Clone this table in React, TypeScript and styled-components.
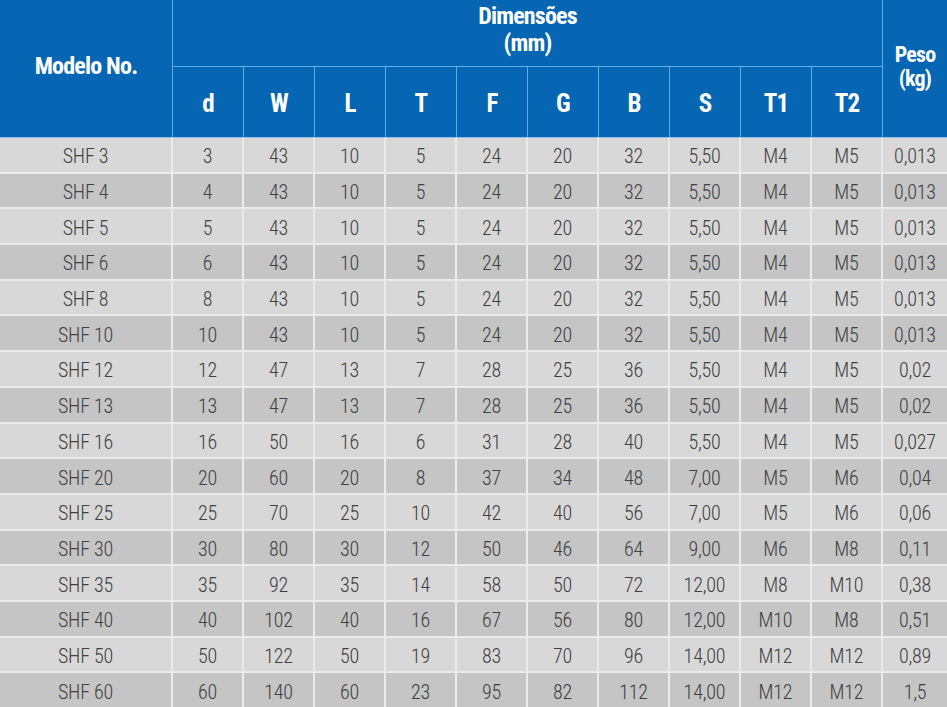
import React from "react";
import styled, { createGlobalStyle } from "styled-components";

const GlobalStyle = createGlobalStyle`
  html, body { margin: 0; padding: 0; background: #ffffff; }
  body { font-family: "Roboto Condensed", "DejaVu Sans Condensed", "Liberation Sans Narrow", Roboto, sans-serif; }
`;

const COLS = "172px repeat(10, 70px) 1fr";

const Page = styled.div`
  width: 947px;
  height: 707px;
  overflow: hidden;
  background: #ebebeb;
`;

const Header = styled.div`
  display: grid;
  grid-template-columns: ${COLS};
  grid-template-rows: 66px 70px;
  gap: 1px;
  background: #62ade6;
  border-bottom: 1px solid #8fc3ea;
  height: 138px;
  box-sizing: border-box;
`;

const HeadCell = styled.div<{ $col?: string; $row?: string; $size?: number; $gap?: number; $pad?: string }>`
  background: #0666b4;
  color: #ffffff;
  font-weight: 700;
  font-size: ${(p) => p.$size ?? 25}px;
  letter-spacing: -0.8px;
  display: flex;
  flex-direction: column;
  align-items: center;
  justify-content: center;
  gap: ${(p) => p.$gap ?? 0}px;
  text-align: center;
  grid-column: ${(p) => p.$col ?? "auto"};
  grid-row: ${(p) => p.$row ?? "auto"};
  padding: ${(p) => p.$pad ?? "0"};
`;

const HeadLine = styled.span`
  display: block;
  line-height: 1;
  white-space: nowrap;
`;

const Body = styled.div`
  display: flex;
  flex-direction: column;
  gap: 2px;
`;

const Row = styled.div`
  display: grid;
  grid-template-columns: 171px repeat(10, 69px) 1fr;
  column-gap: 2px;
  height: 33.7px;
`;

const Cell = styled.div<{ $dark: boolean }>`
  background: ${(p) => (p.$dark ? "#c5c5c5" : "#d8d8d8")};
  color: #404040;
  font-size: 20px;
  font-weight: 300;
  letter-spacing: -0.2px;
  display: flex;
  align-items: center;
  justify-content: center;
  padding-top: 3px;
  box-sizing: border-box;
`;

const rows: string[][] = [
  ["SHF 3", "3", "43", "10", "5", "24", "20", "32", "5,50", "M4", "M5", "0,013"],
  ["SHF 4", "4", "43", "10", "5", "24", "20", "32", "5,50", "M4", "M5", "0,013"],
  ["SHF 5", "5", "43", "10", "5", "24", "20", "32", "5,50", "M4", "M5", "0,013"],
  ["SHF 6", "6", "43", "10", "5", "24", "20", "32", "5,50", "M4", "M5", "0,013"],
  ["SHF 8", "8", "43", "10", "5", "24", "20", "32", "5,50", "M4", "M5", "0,013"],
  ["SHF 10", "10", "43", "10", "5", "24", "20", "32", "5,50", "M4", "M5", "0,013"],
  ["SHF 12", "12", "47", "13", "7", "28", "25", "36", "5,50", "M4", "M5", "0,02"],
  ["SHF 13", "13", "47", "13", "7", "28", "25", "36", "5,50", "M4", "M5", "0,02"],
  ["SHF 16", "16", "50", "16", "6", "31", "28", "40", "5,50", "M4", "M5", "0,027"],
  ["SHF 20", "20", "60", "20", "8", "37", "34", "48", "7,00", "M5", "M6", "0,04"],
  ["SHF 25", "25", "70", "25", "10", "42", "40", "56", "7,00", "M5", "M6", "0,06"],
  ["SHF 30", "30", "80", "30", "12", "50", "46", "64", "9,00", "M6", "M8", "0,11"],
  ["SHF 35", "35", "92", "35", "14", "58", "50", "72", "12,00", "M8", "M10", "0,38"],
  ["SHF 40", "40", "102", "40", "16", "67", "56", "80", "12,00", "M10", "M8", "0,51"],
  ["SHF 50", "50", "122", "50", "19", "83", "70", "96", "14,00", "M12", "M12", "0,89"],
  ["SHF 60", "60", "140", "60", "23", "95", "82", "112", "14,00", "M12", "M12", "1,5"],
];

const dims = ["d", "W", "L", "T", "F", "G", "B", "S", "T1", "T2"];

export default function App() {
  return (
    <>
      <GlobalStyle />
      <Page>
        <Header>
          <HeadCell $col="1" $row="1 / span 2" $size={24} $pad="0 0 5px">
            <HeadLine>Modelo No.</HeadLine>
          </HeadCell>
          <HeadCell $col="2 / span 10" $row="1" $size={24} $gap={3} $pad="0 0 8px">
            <HeadLine>Dimensões</HeadLine>
            <HeadLine>(mm)</HeadLine>
          </HeadCell>
          <HeadCell $col="12" $row="1 / span 2" $size={22} $gap={2} $pad="0 0 4px">
            <HeadLine>Peso</HeadLine>
            <HeadLine>(kg)</HeadLine>
          </HeadCell>
          {dims.map((d, i) => (
            <HeadCell key={d} $col={String(i + 2)} $row="2" $pad="2px 0 0">
              <HeadLine>{d}</HeadLine>
            </HeadCell>
          ))}
        </Header>
        <Body>
          {rows.map((r, ri) => (
            <Row key={r[0]}>
              {r.map((v, ci) => (
                <Cell key={ci} $dark={ri % 2 === 1}>
                  {v}
                </Cell>
              ))}
            </Row>
          ))}
        </Body>
      </Page>
    </>
  );
}
